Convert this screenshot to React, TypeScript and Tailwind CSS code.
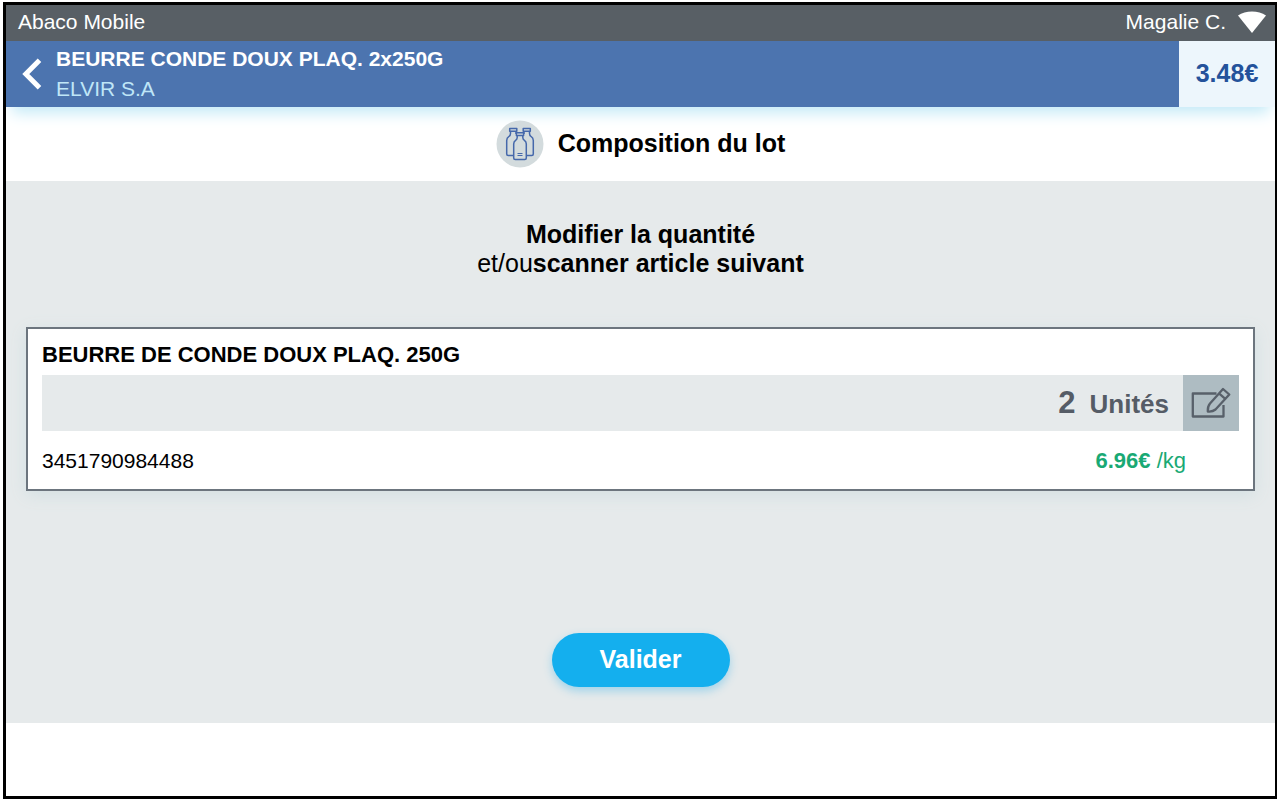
import React from "react";

function BackIcon() {
  return (
    <svg viewBox="0 0 20 32" className="h-8 w-5" fill="none" stroke="#ffffff" strokeWidth="5" aria-hidden="true">
      <path d="M17.5 2.2 3.8 16l13.7 13.8" />
    </svg>
  );
}

function SignalIcon() {
  return (
    <svg viewBox="0 0 28 24" className="h-6 w-7" fill="#ffffff" role="img" aria-label="Wi-Fi">
      <path d="M0 5.5C7.5 .2 20.5 .2 28 5.5L14 23Z" />
    </svg>
  );
}

function BottlesIcon() {
  return (
    <svg viewBox="0 0 48 48" className="size-12" fill="none" stroke="#4568ab" strokeWidth="1.5" strokeLinejoin="round" aria-hidden="true">
      <circle cx="24" cy="24" r="23.5" fill="#d3dbdd" stroke="none" />
      <path d="M18 35.5H12.2Q10.7 35.5 10.7 34V20.5Q10.7 17.6 13 16.3Q14.5 15.4 14.5 13.5V11.5M20 11.5V14" />
      <path d="M13.7 8.5H20.8V11.3H13.7Z" />
      <path d="M30 35.5H35.8Q37.3 35.5 37.3 34V20.5Q37.3 17.6 35 16.3Q33.5 15.4 33.5 13.5V11.5M28 11.5V14" />
      <path d="M27.2 8.5H34.3V11.3H27.2Z" />
      <path fill="#d3dbdd" d="M21.2 15.5V17.5Q21.2 19.3 19.6 20.3Q17.7 21.6 17.7 24V38Q17.7 39.5 19.2 39.5H28.8Q30.3 39.5 30.3 38V24Q30.3 21.6 28.4 20.3Q26.8 19.3 26.8 17.5V15.5" />
      <path fill="#d3dbdd" d="M20.4 12.7H27.6V15.5H20.4Z" />
      <path strokeWidth="1.2" d="M21.5 33.5H26.5M21.5 35.5H26.5" />
    </svg>
  );
}

function EditIcon() {
  return (
    <svg viewBox="0 0 40 32" className="h-8 w-10" fill="none" stroke="#58606a" strokeWidth="2.3" strokeLinejoin="round" aria-hidden="true">
      <path d="M25.5 6.500H1.800V29.500H32.500V18" />
      <path d="M32 2 38.300 7.500 24.500 22.500Q21.500 25 16.800 24.500Q16.500 19.500 19 16.500ZM28 6.300 34.300 11.900" />
    </svg>
  );
}

export default function App() {
  return (
    <div className="flex min-h-screen bg-white px-[3px] pt-[2px] pb-px font-['Liberation_Sans',Arial,sans-serif] text-[21px] leading-6 text-black">
      <div className="flex flex-1 flex-col overflow-hidden border-[3px] border-r-2 border-black bg-white">
        <header className="shadow-[0_12px_14px_-6px_#c4eaf7]">
          <div className="flex h-9 items-center justify-between bg-[#585f65] pr-[9px] pb-[2px] pl-3 text-white">
            <span>Abaco Mobile</span>
            <div className="flex items-center gap-3">
              <span>Magalie C.</span>
              <SignalIcon />
            </div>
          </div>
          <div className="flex bg-[#4c74af]">
            <button type="button" aria-label="Retour" className="flex w-[50px] items-center pl-4">
              <BackIcon />
            </button>
            <div className="flex-1 pt-[6px] pb-[6px]">
              <h1 className="text-[21px] leading-6 font-bold text-white">BEURRE CONDE DOUX PLAQ. 2x250G</h1>
              <p className="pt-[6px] text-[21px] leading-6 text-[#bfe6f7]">ELVIR S.A</p>
            </div>
            <div className="flex w-24 items-center justify-center bg-[#edf6fc] pb-[2px] text-[25px] font-bold text-[#24529b]">
              3.48€
            </div>
          </div>
        </header>

        <div className="flex h-[74px] items-center justify-center gap-[14px]">
          <BottlesIcon />
          <h2 className="pb-[2px] text-[25px] leading-7 font-bold">Composition du lot</h2>
        </div>

        <main className="flex flex-col items-center bg-[#e6eaeb] px-5 pt-[39px] pb-9">
          <p className="text-center text-[25px] leading-[29px]">
            <strong>Modifier la quantité</strong>
            <br />
            et/ou<strong>scanner article suivant</strong>
          </p>

          <section className="mt-[49px] w-full border-2 border-[#6c757e] bg-white px-[14px] pt-[14px] pb-4 shadow-[0_4px_16px_#d3e0e3]">
            <h3 className="text-[22px] leading-6 font-bold">BEURRE DE CONDE DOUX PLAQ. 250G</h3>
            <div className="mt-2 flex h-14 items-center bg-[#e6eaeb] font-bold text-[#555c66]">
              <div className="flex flex-1 items-baseline justify-end gap-[14px] pr-[14px]">
                <span className="text-[31px] leading-8">2</span>
                <span className="text-[26px] leading-8">Unités</span>
              </div>
              <button type="button" aria-label="Modifier" className="flex size-14 items-center justify-center bg-[#aebcc2]">
                <EditIcon />
              </button>
            </div>
            <div className="flex justify-between pt-[18px] pr-[53px]">
              <span>3451790984488</span>
              <span className="text-[22px] text-[#19a974]">
                <strong>6.96€</strong> /kg
              </span>
            </div>
          </section>

          <button
            type="button"
            className="mt-[142px] h-[54px] w-[178px] rounded-full bg-[#14afee] pb-[2px] text-[25px] leading-7 font-bold text-white shadow-[0_4px_10px_#9fd3ea]"
          >
            Valider
          </button>
        </main>
      </div>
    </div>
  );
}
